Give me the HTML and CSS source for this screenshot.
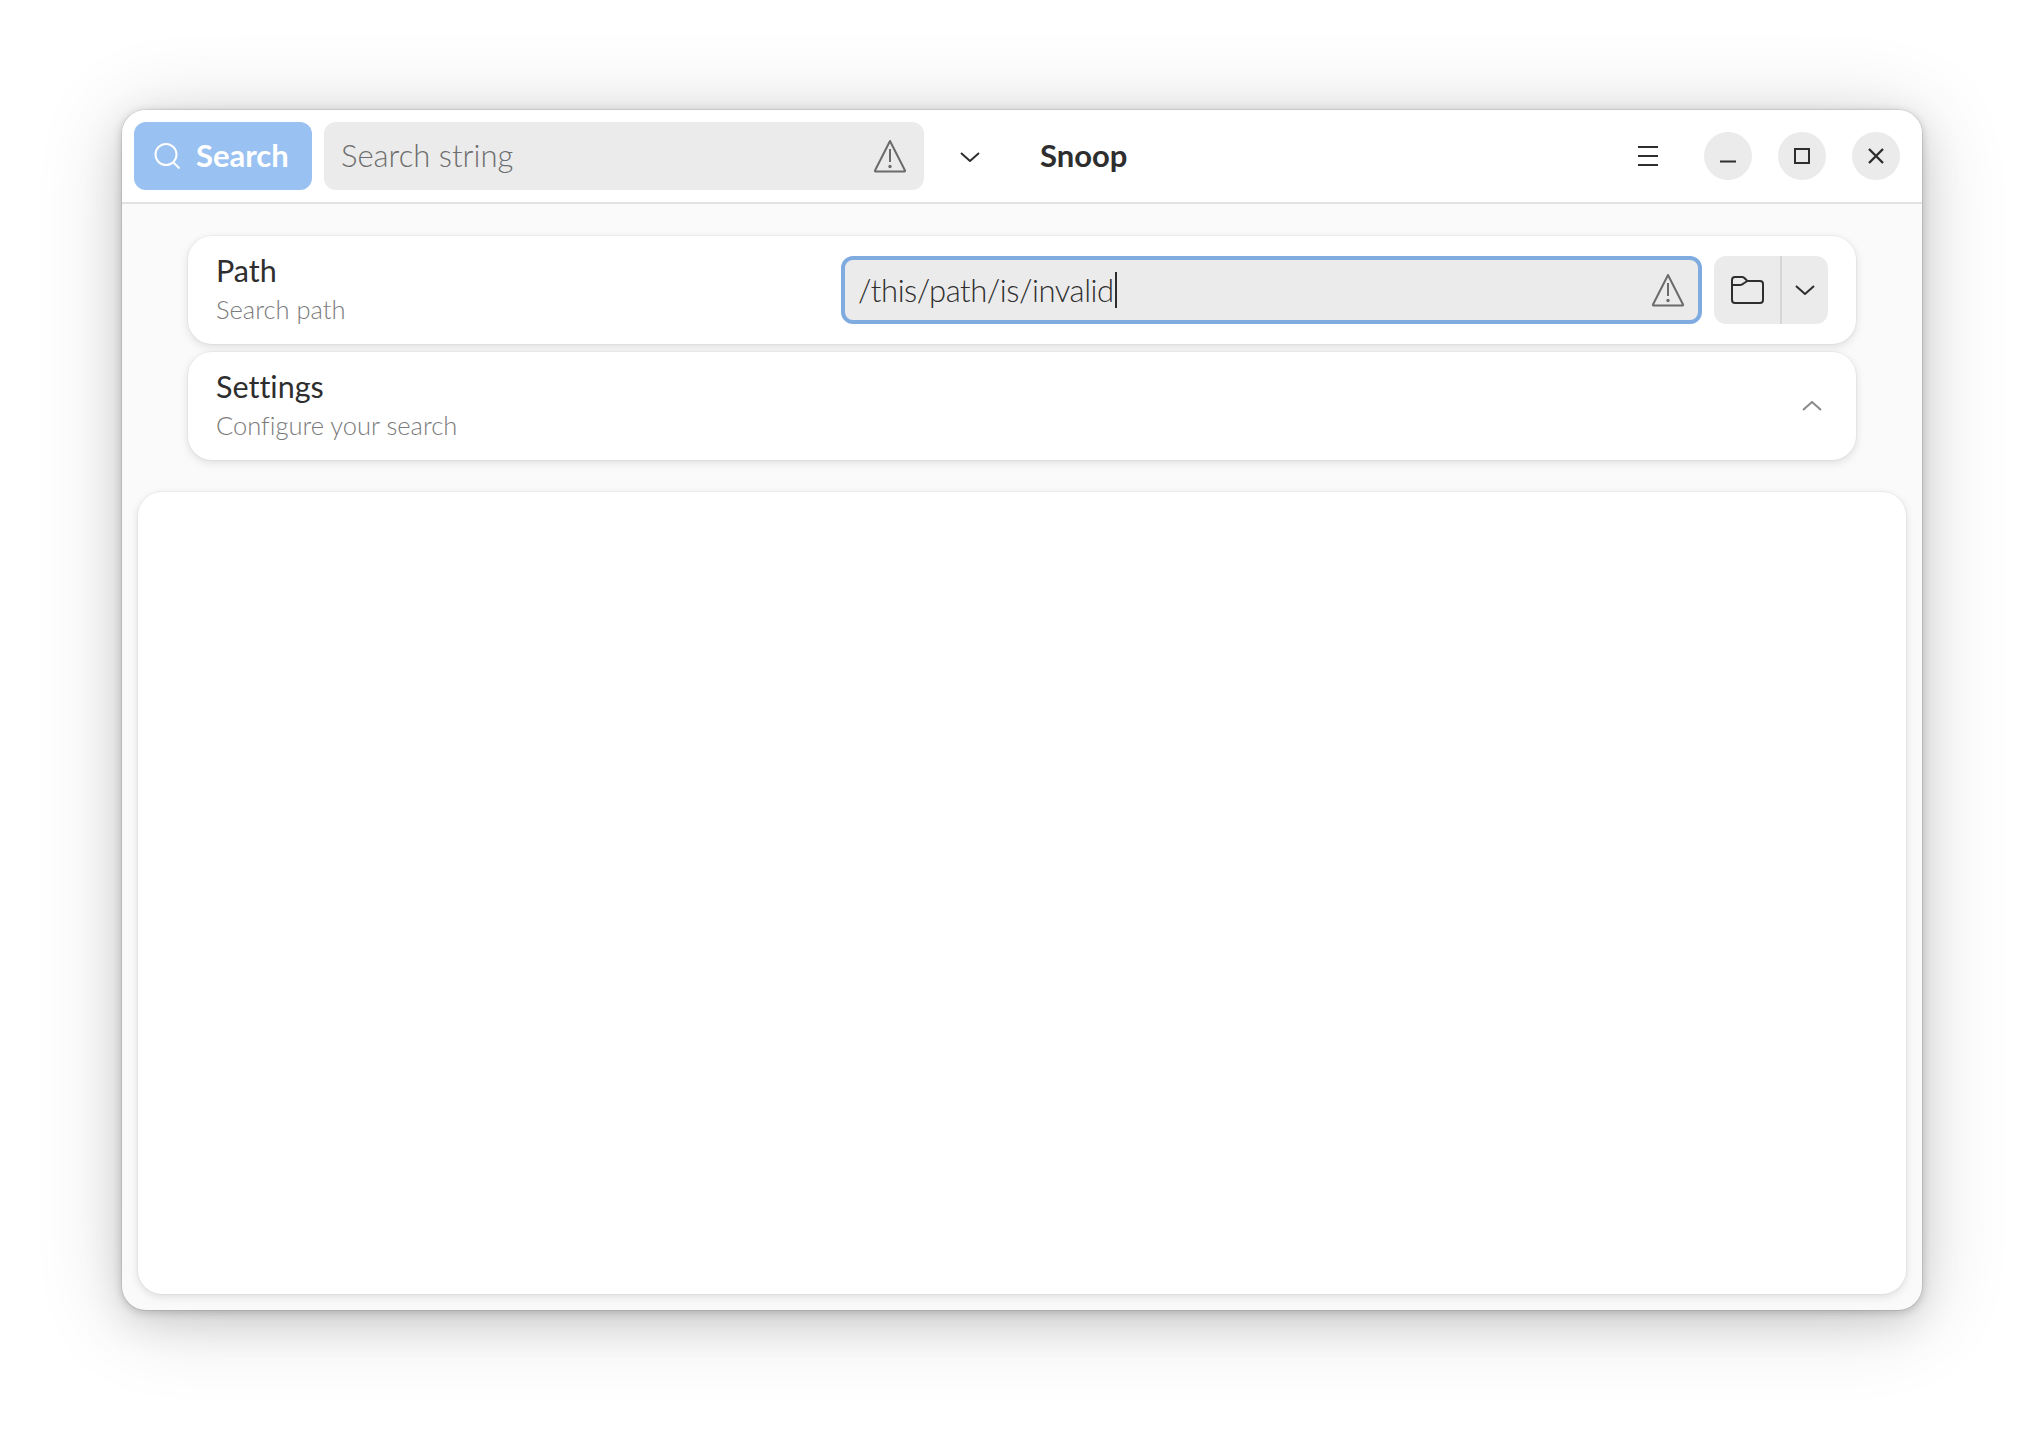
FILE: index.html
```html
<!DOCTYPE html>
<html lang="en">
<head>
<meta charset="utf-8">
<title>Snoop</title>
<link rel="stylesheet" href="styles.css">
</head>
<body>
<main class="window">
  <header class="headerbar">
    <button class="search-btn">
      <svg class="ico" width="32" height="32" viewBox="0 0 32 32"><circle cx="14" cy="14.500" r="10.500" fill="none" stroke="#fff" stroke-width="2"/><path d="M21.500 22.500l6 6" fill="none" stroke="#fff" stroke-width="2"/></svg>
      <span class="btn-label">Search</span>
    </button>
    <div class="entry search-entry">
      <span class="placeholder">Search string</span>
      <svg class="ico warn" width="36" height="36" viewBox="0 0 36 36"><path d="M18 3L33 32.500a.6.6 0 0 1-.5 1H3.500a.6.6 0 0 1-.5-1z" fill="none" stroke="#6b6b6b" stroke-width="2" stroke-linejoin="round"/><path d="M18 11v13" stroke="#6b6b6b" stroke-width="2" fill="none"/><circle cx="18" cy="28.500" r="1.700" fill="#6b6b6b"/></svg>
    </div>
    <div class="head-chevron">
      <svg class="ico" width="20" height="10" viewBox="0 0 20 10"><path d="M1 1l9 8 9-8" fill="none" stroke="#2e2e2e" stroke-width="2"/></svg>
    </div>
    <h1 class="title">Snoop</h1>
    <div class="controls">
      <svg class="ico menu" width="20" height="20" viewBox="0 0 20 20"><path d="M0 1h20M0 10h20M0 19h20" fill="none" stroke="#2e2e2e" stroke-width="2"/></svg>
      <div class="wbtn"><svg class="ico" width="16" height="16" viewBox="0 0 16 16"><path d="M0 13.500h16" fill="none" stroke="#2e2e2e" stroke-width="2"/></svg></div>
      <div class="wbtn"><svg class="ico" width="16" height="16" viewBox="0 0 16 16"><rect x="1" y="1" width="14" height="14" fill="none" stroke="#2e2e2e" stroke-width="2"/></svg></div>
      <div class="wbtn"><svg class="ico" width="18" height="18" viewBox="0 0 18 18"><path d="M2 2l14 14M16 2L2 16" fill="none" stroke="#2e2e2e" stroke-width="2.400"/></svg></div>
    </div>
  </header>
  <div class="content">
    <div class="cards">
      <section class="card row-path">
        <div class="labels">
          <div class="row-title">Path</div>
          <div class="row-sub">Search path</div>
        </div>
        <div class="entry path-entry">
          <span class="path-text">/this/path/is/invalid</span><span class="caret"></span>
          <svg class="ico warn" width="36" height="36" viewBox="0 0 36 36"><path d="M18 3L33 32.500a.6.6 0 0 1-.5 1H3.500a.6.6 0 0 1-.5-1z" fill="none" stroke="#6b6b6b" stroke-width="2" stroke-linejoin="round"/><path d="M18 11v13" stroke="#6b6b6b" stroke-width="2" fill="none"/><circle cx="18" cy="28.500" r="1.700" fill="#6b6b6b"/></svg>
        </div>
        <div class="split">
          <div class="split-main">
            <svg class="ico" width="33" height="28" viewBox="0 0 33 28"><path d="M4 1h7c1 0 1.700.4 2.400 1l3 3H29a3 3 0 0 1 3 3v16a3 3 0 0 1-3 3H4a3 3 0 0 1-3-3V4a3 3 0 0 1 3-3zM1 9h8c1.500 0 2.500-.5 3.500-1.500L16.400 5" fill="none" stroke="#2e2e2e" stroke-width="2" stroke-linejoin="round"/></svg>
          </div>
          <div class="split-arrow">
            <svg class="ico" width="20" height="10" viewBox="0 0 20 10"><path d="M1 1l9 8 9-8" fill="none" stroke="#2e2e2e" stroke-width="2"/></svg>
          </div>
        </div>
      </section>
      <section class="card row-settings">
        <div class="labels">
          <div class="row-title">Settings</div>
          <div class="row-sub">Configure your search</div>
        </div>
        <svg class="ico up" width="20" height="10" viewBox="0 0 20 10"><path d="M1 9l9-8 9 8" fill="none" stroke="#8a8a8a" stroke-width="2"/></svg>
      </section>
    </div>
    <div class="panel"></div>
  </div>
</main>
</body>
</html>
```
FILE: styles.css
```css
* { box-sizing: border-box; }
html, body { margin: 0; height: 100%; }
body {
  background: #fff;
  padding: 110px 122px 134px;
  font-family: "Lato", "Noto Sans", sans-serif;
  font-variant-ligatures: none;
  color: #2e2e2e;
}
.ico { display: block; flex: none; }
.window {
  height: 1200px;
  display: flex;
  flex-direction: column;
  background: #fafafa;
  border-radius: 24px;
  box-shadow: 0 0 0 1px rgba(0,0,0,.07), 0 2px 10px rgba(0,0,0,.2), 0 12px 40px rgba(0,0,0,.12), 0 8px 88px rgba(0,0,0,.16);
}
.headerbar {
  height: 94px;
  flex: none;
  display: flex;
  align-items: center;
  padding: 12px 22px 12px 12px;
  background: #fff;
  border-bottom: 2px solid #e2e2e2;
  border-radius: 24px 24px 0 0;
}
.search-btn {
  width: 178px;
  height: 68px;
  border: 0;
  border-radius: 12px;
  background: #99c1f1;
  color: #fff;
  font: 700 31px "Lato", "Noto Sans", sans-serif;
  font-variant-ligatures: none;
  display: flex;
  align-items: center;
  gap: 12px;
  padding: 0 0 0 18px;
}
.btn-label { padding-bottom: 2px; }
.entry {
  height: 68px;
  background: #ebebeb;
  border-radius: 12px;
  display: flex;
  align-items: center;
}
.search-entry {
  width: 600px;
  margin-left: 12px;
  padding: 0 16px 0 17px;
  justify-content: space-between;
}
.placeholder { font-size: 31px; font-weight: 300; color: #6e6e6e; padding-bottom: 2px; }
.head-chevron { margin-left: 36px; padding-top: 1px; }
.title { margin: 0 0 0 60px; padding-bottom: 2px; font-size: 31px; font-weight: 700; color: #2e2e2e; }
.controls { margin-left: auto; display: flex; align-items: center; gap: 26px; }
.menu { margin-right: 20px; }
.wbtn {
  width: 48px;
  height: 48px;
  border-radius: 50%;
  background: #ebebeb;
  display: flex;
  align-items: center;
  justify-content: center;
}
.content {
  flex: 1;
  min-height: 0;
  display: flex;
  flex-direction: column;
  padding: 32px 16px 16px;
}
.cards { display: flex; flex-direction: column; gap: 8px; padding: 0 50px; }
.card {
  height: 108px;
  background: #fff;
  border-radius: 24px;
  box-shadow: 0 0 0 1px rgba(0,0,0,.03), 0 2px 6px 1px rgba(0,0,0,.07), 0 4px 12px 2px rgba(0,0,0,.03);
  display: flex;
  align-items: center;
  padding: 0 28px;
}
.labels { flex: none; width: 625px; padding-bottom: 3px; }
.row-title { font-size: 30.500px; font-weight: 400; line-height: 38px; color: #2e2e2e; }
.row-sub { font-size: 25.500px; font-weight: 300; line-height: 34px; margin-top: 3px; color: #7b7b7b; }
.path-entry {
  width: 861px;
  border: 4px solid #7fabe0;
  padding: 0 12px 0 13px;
}
.path-text { font-size: 31px; font-weight: 300; letter-spacing: -.45px; color: #2e2e2e; padding-bottom: 1px; }
.caret { width: 2px; height: 36px; background: #2e2e2e; margin-left: 1px; }
.path-entry .warn { margin-left: auto; }
.split {
  margin-left: 12px;
  width: 114px;
  height: 68px;
  border-radius: 12px;
  background: #ebebeb;
  display: flex;
}
.split-main {
  width: 68px;
  border-right: 2px solid #d6d6d6;
  display: flex;
  align-items: center;
  justify-content: center;
}
.split-arrow { flex: 1; display: flex; align-items: center; justify-content: center; }
.row-settings .up { margin-left: auto; margin-right: 6px; }
.panel {
  flex: 1;
  margin-top: 32px;
  background: #fff;
  border-radius: 24px;
  box-shadow: 0 0 0 1px rgba(0,0,0,.03), 0 2px 6px 1px rgba(0,0,0,.07), 0 4px 12px 2px rgba(0,0,0,.03);
}
```
